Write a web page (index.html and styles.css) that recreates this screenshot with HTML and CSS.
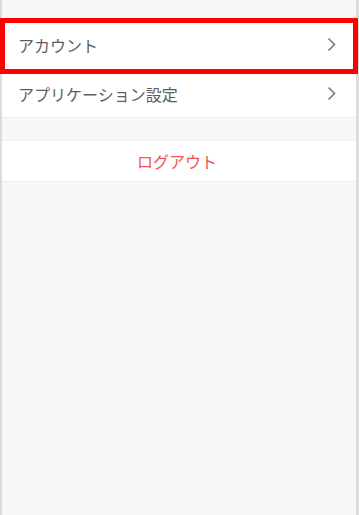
FILE: index.html
```html
<!DOCTYPE html>
<html lang="ja">

<head>
    <meta charset="UTF-8">
    <meta name="viewport" content="width=device-width, initial-scale=1.0">
    <title>設定</title>
    <link rel="stylesheet" href="styles.css">
</head>

<body>
    <div id="page">
        <div class="group">
            <div class="row">
                <span class="label">アカウント</span>
                <svg class="chevron" width="9" height="15" viewBox="0 0 9 15">
                    <path d="M1.5 1.5 L7.5 7.5 L1.5 13.5" fill="none" stroke="#7a7a7a" stroke-width="1.6" />
                </svg>
            </div>
            <div class="row">
                <span class="label">アプリケーション設定</span>
                <svg class="chevron" width="9" height="15" viewBox="0 0 9 15">
                    <path d="M1.5 1.5 L7.5 7.5 L1.5 13.5" fill="none" stroke="#7a7a7a" stroke-width="1.6" />
                </svg>
            </div>
        </div>

        <div class="group">
            <div class="row logout">ログアウト</div>
        </div>

        <!-- highlight around the first row -->
        <div class="highlight"></div>
    </div>
</body>

</html>
```

FILE: styles.css
```css
body, html {
    margin: 0;
    padding: 0;
    height: 100%;
    background-color: #dcdcdc;
    font-family: "Noto Sans CJK JP", "Noto Sans", sans-serif;
}

#page {
    position: relative;
    margin: 0 3px 0 2px;
    height: 100%;
    background-color: #f8f8f8;
    padding-top: 20px;
    box-sizing: border-box;
}

.group {
    background-color: #fff;
    border-top: 1px solid #efefef;
    border-bottom: 1px solid #efefef;
    margin-bottom: 22px;
}

.group:first-child {
    border-top: none;
}

.row {
    display: flex;
    align-items: center;
    justify-content: space-between;
    height: 49px;
    padding: 0 20px 0 16px;
    border-bottom: 1px solid #efefef;
    font-size: 16px;
    color: #5e5e5e;
}

.row:last-child {
    border-bottom: none;
    height: 47px;
}

.logout {
    justify-content: center;
    height: 40px !important;
    color: #f5534f;
}

.highlight {
    position: absolute;
    top: 18px;
    left: -2px;
    width: 358px;
    height: 56px;
    border: 5px solid #ff0000;
    box-sizing: border-box;
}
```
